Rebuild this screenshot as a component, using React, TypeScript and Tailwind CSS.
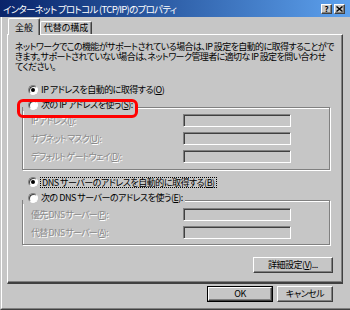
import type { ReactNode } from "react";

const raised =
  "border border-t-white border-l-white border-r-[#404040] border-b-[#404040] shadow-[inset_-1px_-1px_0_#808080]";
const sunken =
  "border border-t-[#808080] border-l-[#808080] border-r-white border-b-white shadow-[inset_1px_1px_0_#404040]";
const etched = "border border-[#808080] shadow-[inset_1px_1px_0_#fff,1px_1px_0_#fff]";
const dimmed = "text-[#8a8a8a] [text-shadow:1px_1px_0_#fff]";

function Radio({ checked = false }: { checked?: boolean }) {
  return (
    <span className="flex h-[10px] w-[10px] shrink-0 items-center justify-center rounded-full border border-t-[#808080] border-l-[#808080] border-r-white border-b-white bg-white shadow-[inset_1px_1px_0_#404040]">
      {checked ? <span className="h-[4px] w-[4px] rounded-full bg-black" /> : null}
    </span>
  );
}

function Field({ label }: { label: ReactNode }) {
  return (
    <div className="flex h-[13px] items-center">
      <span className={`w-[160px] whitespace-nowrap pl-[8px] tracking-[-0.8px] ${dimmed}`}>
        {label}
      </span>
      <span className={`h-[13px] w-[108px] ${sunken}`} />
    </div>
  );
}

export default function App() {
  return (
    <div className="flex h-[310px] w-[350px] flex-col overflow-hidden bg-[#c6c6c6] font-['Noto_Sans_CJK_JP',sans-serif] text-[9px] leading-[12px] tracking-[-0.5px] text-black [font-feature-settings:'palt']">
      {/* title bar */}
      <div className="flex h-[17px] shrink-0 items-center bg-linear-to-r from-[#0a246a] to-[#5ea2ee] pl-[3px] pr-[5px]">
        <span className="flex-1 whitespace-nowrap text-[9.5px] tracking-[-0.7px] text-white">
          インターネット プロトコル (TCP/IP)のプロパティ
        </span>
        <span
          className={`flex h-[10px] w-[11px] items-center justify-center bg-[#c6c6c6] text-[8px] font-bold leading-none tracking-normal ${raised}`}
        >
          ?
        </span>
        <span
          className={`ml-[2px] flex h-[10px] w-[11px] items-center justify-center bg-[#c6c6c6] ${raised}`}
        >
          <svg width="7" height="6" viewBox="0 0 7 6">
            <path d="M0.5 0.5l6 5M6.5 0.5l-6 5" stroke="#000" strokeWidth="1.4" />
          </svg>
        </span>
      </div>

      {/* window body */}
      <div className="flex flex-1 flex-col border-b border-l border-b-[#404040] border-l-[#c6c6c6]">
        <div className="flex flex-1 flex-col border-b border-l border-b-[#808080] border-l-white pl-[5px]">
          {/* tabs */}
          <div className="mt-[1px] flex h-[16px] items-end">
            <div className="relative z-10 -mb-px ml-[1px] flex h-[17px] w-[32px] items-center justify-center rounded-t-[2px] border border-b-0 border-t-white border-l-white border-r-[#404040] bg-[#c6c6c6] pt-px tracking-normal shadow-[inset_-1px_0_0_#808080]">
              全般
            </div>
            <div className="flex h-[13px] w-[52px] items-center justify-center rounded-t-[2px] border border-b-0 border-t-white border-l-white border-r-[#404040] tracking-normal shadow-[inset_-1px_0_0_#808080]">
              代替の構成
            </div>
          </div>

          {/* tab panel */}
          <div className="relative flex h-[250px] w-[336px] flex-col border border-t-white border-l-white border-r-[#404040] border-b-2 border-b-[#404040] shadow-[inset_-1px_-1px_0_#808080]">
            <p className="whitespace-nowrap pl-[7px] pt-[7px] leading-[10px] tracking-[-0.6px]">
              ネットワークでこの機能がサポートされている場合は、IP 設定を自動的に取得することがで
              <br />
              きます。サポートされていない場合は、ネットワーク管理者に適切な IP 設定を問い合わせ
              <br />
              てください。
            </p>

            <div className="mt-[12px] flex h-[12px] items-center gap-[3px] pl-[20px]">
              <Radio checked />
              <span className="whitespace-nowrap">
                IP アドレスを自動的に取得する(<u>O</u>)
              </span>
            </div>

            <div className={`ml-[14px] mt-[11px] w-[308px] pb-[6px] ${etched}`}>
              <div className="-mt-[9px] flex h-[12px] w-fit items-center gap-[3px] bg-[#c6c6c6] pl-[5px] pr-[2px]">
                <Radio />
                <span className="whitespace-nowrap">
                  次の IP アドレスを使う(<u>S</u>):
                </span>
              </div>
              <div className="mt-[3px] flex flex-col gap-[5px]">
                <Field label={<>IP アドレス(<u>I</u>):</>} />
                <Field label={<>サブネット マスク(<u>U</u>):</>} />
                <Field label={<>デフォルト ゲートウェイ(<u>D</u>):</>} />
              </div>
            </div>

            <div className="mt-[6px] flex h-[12px] items-center gap-[2px] pl-[20px]">
              <Radio checked />
              <span className="whitespace-nowrap border border-dotted border-black px-px leading-[9px]">
                DNS サーバーのアドレスを自動的に取得する(<u>B</u>)
              </span>
            </div>

            <div className={`ml-[14px] mt-[12px] w-[308px] pb-[5px] ${etched}`}>
              <div className="-mt-[9px] flex h-[12px] w-fit items-center gap-[3px] bg-[#c6c6c6] pl-[5px] pr-[2px]">
                <Radio />
                <span className="whitespace-nowrap">
                  次の DNS サーバーのアドレスを使う(<u>E</u>):
                </span>
              </div>
              <div className="mt-[4px] flex flex-col gap-[5px]">
                <Field label={<>優先 DNS サーバー(<u>P</u>):</>} />
                <Field label={<>代替 DNS サーバー(<u>A</u>):</>} />
              </div>
            </div>

            <div
              className={`mr-[9px] mt-[12px] flex h-[16px] w-[80px] items-center justify-center self-end whitespace-nowrap ${raised}`}
            >
              詳細設定(<u>V</u>)...
            </div>

            {/* red highlight drawn over the dialog */}
            <div className="absolute left-[9px] top-[64px] h-[19px] w-[121px] rounded-[6px] border-[3px] border-[#f00]" />
          </div>

          {/* dialog buttons */}
          <div className="mt-[2px] flex justify-end gap-[4px] pr-[17px]">
            <div className="h-[16px] w-[66px] border border-black">
              <div className={`flex h-full w-full items-center justify-center ${raised}`}>OK</div>
            </div>
            <div className={`flex h-[16px] w-[56px] items-center justify-center ${raised}`}>
              キャンセル
            </div>
          </div>
        </div>
      </div>
    </div>
  );
}
